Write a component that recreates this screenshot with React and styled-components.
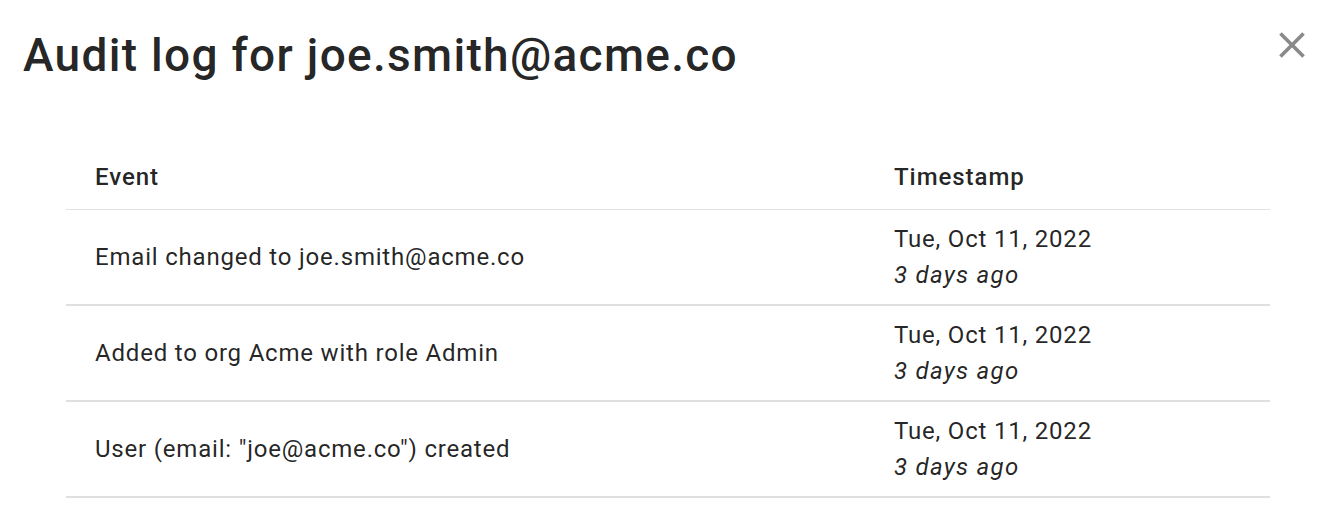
import styled, { createGlobalStyle } from "styled-components";

const GlobalStyle = createGlobalStyle`
	body {
		margin: 0;
		background: #fff;
		font-family: Roboto, "Noto Sans", Arial, sans-serif;
		color: rgba(0, 0, 0, 0.87);
	}
`;

const events = [
	{ text: "Email changed to joe.smith@acme.co", date: "Tue, Oct 11, 2022", ago: "3 days ago" },
	{ text: "Added to org Acme with role Admin", date: "Tue, Oct 11, 2022", ago: "3 days ago" },
	{ text: 'User (email: "joe@acme.co") created', date: "Tue, Oct 11, 2022", ago: "3 days ago" },
];

const CloseIcon = () => (
	<svg width="44" height="44" viewBox="0 0 24 24" fill="#8a8a8a">
		<path d="M19 6.41 17.59 5 12 10.59 6.41 5 5 6.41 10.59 12 5 17.59 6.41 19 12 13.41 17.59 19 19 17.59 13.41 12z" />
	</svg>
);

const App = () => {
	return (
		<>
			<GlobalStyle />
			<Dialog>
				<TitleBar>
					<Title>Audit log for joe.smith@acme.co</Title>
					<CloseButton aria-label="close">
						<CloseIcon />
					</CloseButton>
				</TitleBar>
				<Content>
					<Table>
						<colgroup>
							<col style={{ width: "799px" }} />
							<col />
						</colgroup>
						<thead>
							<tr>
								<HeadCell>Event</HeadCell>
								<HeadCell>Timestamp</HeadCell>
							</tr>
						</thead>
						<tbody>
							{events.map((e, i) => (
								<tr key={i}>
									<Cell>{e.text}</Cell>
									<Cell>
										<div>{e.date}</div>
										<Ago>{e.ago}</Ago>
									</Cell>
								</tr>
							))}
						</tbody>
					</Table>
				</Content>
			</Dialog>
		</>
	);
};

export default App;

const Dialog = styled.div`
	width: 1332px;
	height: 512px;
	box-sizing: border-box;
	overflow: hidden;
`;

const TitleBar = styled.div`
	display: flex;
	justify-content: space-between;
	align-items: flex-start;
	padding: 25px 18px 0 23px;
`;

const Title = styled.h2`
	margin: 0;
	font-size: 46px;
	line-height: 60px;
	font-weight: 500;
	letter-spacing: 1.3px;
	color: rgba(0, 0, 0, 0.87);
`;

const CloseButton = styled.button`
	border: none;
	background: none;
	padding: 0;
	margin-top: -2px;
	width: 44px;
	height: 44px;
	cursor: pointer;
`;

const Content = styled.div`
	padding: 74px 62px 0 66px;
`;

const Table = styled.table`
	width: 100%;
	table-layout: fixed;
	border-collapse: collapse;
	font-size: 24px;
	line-height: 36px;
	letter-spacing: 0.8px;
`;

const HeadCell = styled.th`
	text-align: left;
	font-weight: 500;
	padding: 0 29px 14px;
	letter-spacing: 0.95px;
	border-bottom: 1px solid #e0e0e0;
`;

const Cell = styled.td`
	padding: 11px 29px;
	font-weight: 400;
	vertical-align: middle;
	border-bottom: 2px solid #e0e0e0;
`;

const Ago = styled.div`
	font-style: italic;
	letter-spacing: 1.3px;
`;
